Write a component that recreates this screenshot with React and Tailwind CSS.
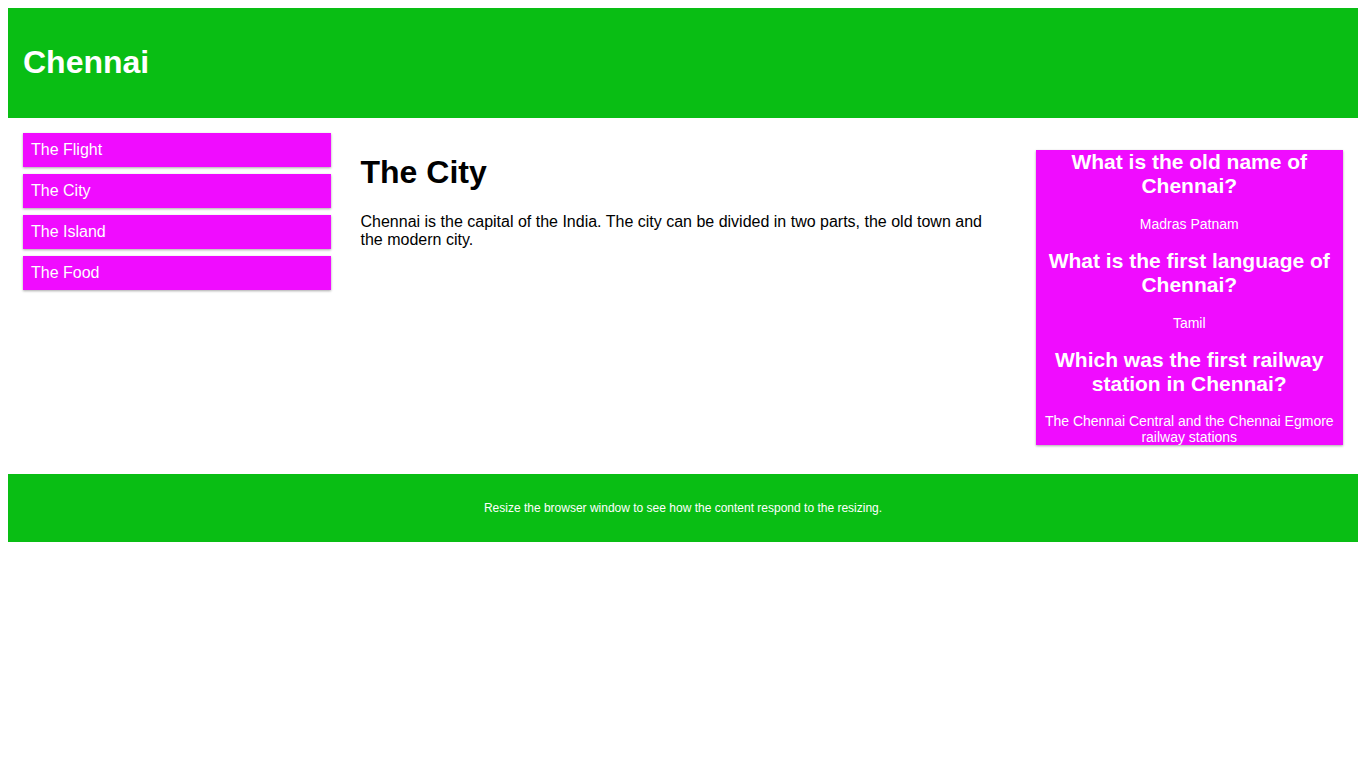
const menuItems = ["The Flight", "The City", "The Island", "The Food"];

const faqs = [
    { q: "What is the old name of Chennai?", a: "Madras Patnam" },
    { q: "What is the first language of Chennai?", a: "Tamil" },
    {
        q: "Which was the first railway station in Chennai?",
        a: "The Chennai Central and the Chennai Egmore railway stations",
    },
];

export default function App() {
    return (
        <div className="p-2 font-['Liberation_Sans',Arial,sans-serif] text-black bg-white">
            {/* Header */}
            <div className="bg-[#09be14] text-white p-[15px]">
                <h1 className="text-[32px] leading-[37px] font-bold my-[21.44px]">Chennai</h1>
            </div>

            <div className="flex items-start">
                {/* Menu */}
                <div className="w-1/4 p-[15px]">
                    <ul>
                        {menuItems.map((item) => (
                            <li
                                key={item}
                                className="bg-[#f00cff] text-white p-2 mb-[7px] text-base leading-[18px] shadow-[0_1px_3px_rgba(0,0,0,0.12),0_1px_2px_rgba(0,0,0,0.24)]"
                            >
                                {item}
                            </li>
                        ))}
                    </ul>
                </div>

                {/* Main */}
                <div className="w-1/2 p-[15px]">
                    <h1 className="text-[32px] leading-[37px] font-bold my-[21.44px]">The City</h1>
                    <p className="text-base leading-[18px] my-4">
                        Chennai is the capital of the India. The city can be divided in two parts, the old town and
                        the modern city.
                    </p>
                </div>

                {/* Aside */}
                <div className="w-1/4 p-[15px]">
                    <div className="bg-[#f00cff] text-white text-center text-[14px] mt-[17.43px] mb-[14px] shadow-[0_1px_3px_rgba(0,0,0,0.12),0_1px_2px_rgba(0,0,0,0.24)]">
                        {faqs.map((f, i) => (
                            <div key={i}>
                                <h2
                                    className={`text-[21px] leading-[24px] font-bold mb-[17.43px] ${i === 0 ? "mt-0" : "mt-[17.43px]"}`}
                                >
                                    {f.q}
                                </h2>
                                <p className={`leading-[16px] mt-[14px] ${i === faqs.length - 1 ? "mb-0" : "mb-[14px]"}`}>
                                    {f.a}
                                </p>
                            </div>
                        ))}
                    </div>
                </div>
            </div>

            {/* Footer */}
            <div className="bg-[#09be14] text-white text-center text-[12px] p-[15px]">
                <p className="leading-[14px] my-3">Resize the browser window to see how the content respond to the resizing.</p>
            </div>
        </div>
    );
}
